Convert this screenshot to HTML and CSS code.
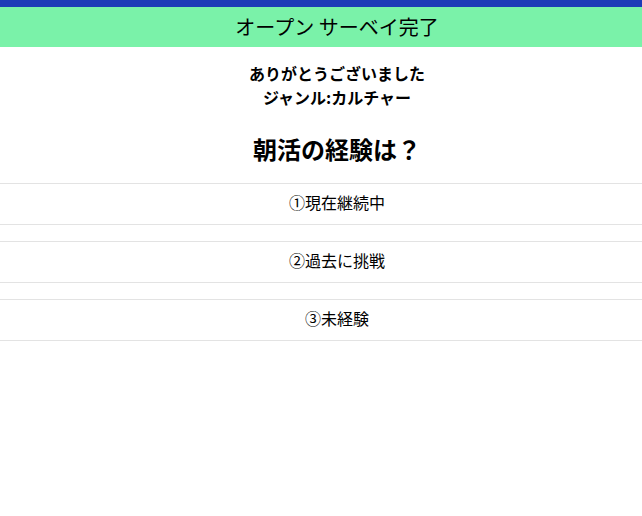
FILE: index.html
```html
<!DOCTYPE html>
<html lang="ja">
<head>
<meta charset="utf-8">
<link rel="stylesheet" href="styles.css">
</head>
<body>
<div class="topbar"></div>
<header class="header">オープン サーベイ完了</header>
<main class="content">
  <p class="thanks">ありがとうございました<br>ジャンル:カルチャー</p>
  <h2 class="question">朝活の経験は？</h2>
  <ul class="options">
    <li class="option">①現在継続中</li>
    <li class="option">②過去に挑戦</li>
    <li class="option">③未経験</li>
  </ul>
</main>
</body>
</html>
```
FILE: styles.css
```css
html, body {
  margin: 0;
  padding: 0;
  background: #fff;
  font-family: "Noto Sans CJK JP", "Noto Sans", sans-serif;
  color: #000;
}
.topbar {
  height: 7px;
  background: #1d3bb7;
}
.header {
  height: 40px;
  line-height: 40px;
  background: #7af2a9;
  text-align: center;
  font-size: 20px;
  padding-left: 32px;
}
.content {
  text-align: center;
}
.thanks {
  margin: 14px 0 0;
  padding-left: 32px;
  font-size: 16px;
  font-weight: bold;
  line-height: 24px;
}
.question {
  margin: 22px 0 0;
  padding-left: 32px;
  font-size: 24px;
  font-weight: bold;
  line-height: 36px;
}
.options {
  list-style: none;
  margin: 16px 0 0;
  padding: 0;
  display: flex;
  flex-direction: column;
  gap: 16px;
}
.option {
  border-top: 1px solid #e3e3e3;
  border-bottom: 1px solid #e3e3e3;
  height: 36px;
  line-height: 36px;
  padding: 0 0 4px 32px;
  font-size: 16px;
}
```
